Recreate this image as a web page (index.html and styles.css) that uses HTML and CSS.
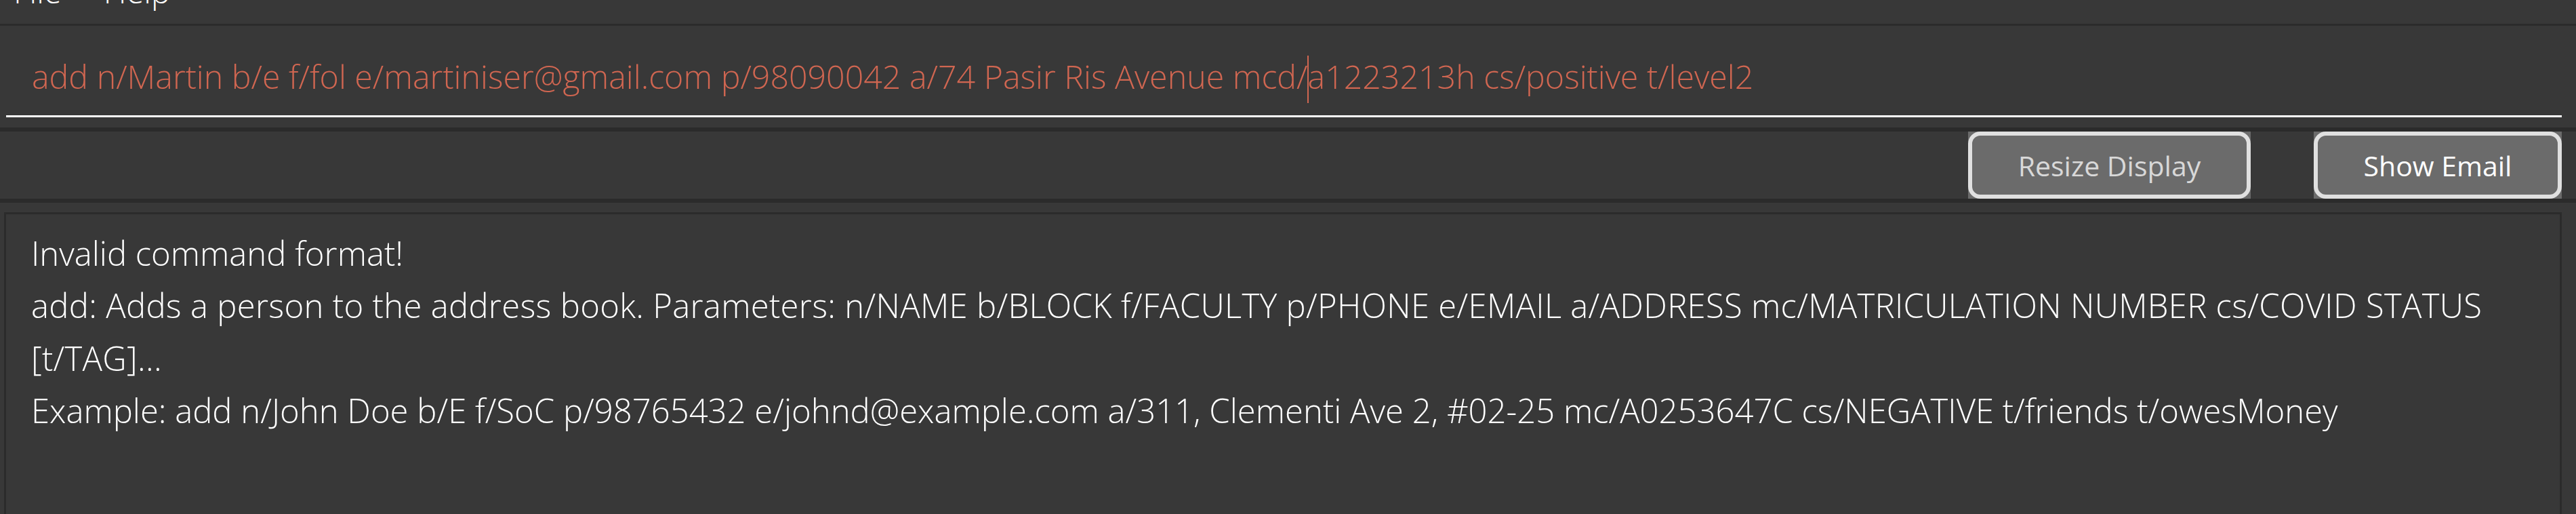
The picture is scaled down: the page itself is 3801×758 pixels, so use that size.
FILE: index.html
```html
<!DOCTYPE html>
<html lang="en">
<head>
<meta charset="utf-8">
<title>AddressBook</title>
<link rel="stylesheet" href="styles.css">
</head>
<body>
<div class="app">
  <nav class="menubar">
    <span class="menu-item menu-file">File</span>
    <span class="menu-item menu-help">Help</span>
  </nav>
  <section class="command-pane">
    <div class="command-field">add n/Martin b/e f/fol e/martiniser@gmail.com p/98090042 a/74 Pasir Ris Avenue mcd/<span class="caret"></span>a1223213h cs/positive t/level2</div>
  </section>
  <section class="button-bar">
    <div class="btn btn-resize"><span class="btn-face btn-face-dim">Resize Display</span></div>
    <div class="btn btn-email"><span class="btn-face">Show Email</span></div>
  </section>
  <section class="result-pane">
    <div class="result-box">
      <p class="result-line">Invalid command format!</p>
      <p class="result-line result-usage">add: Adds a person to the address book. Parameters: n/NAME b/BLOCK f/FACULTY p/PHONE e/EMAIL a/ADDRESS mc/MATRICULATION NUMBER cs/COVID STATUS<br>[t/TAG]...</p>
      <p class="result-line">Example: add n/John Doe b/E f/SoC p/98765432 e/johnd@example.com a/311, Clementi Ave 2, #02-25 mc/A0253647C cs/NEGATIVE t/friends t/owesMoney</p>
    </div>
  </section>
</div>
</body>
</html>
```
FILE: styles.css
```css
html, body {
  margin: 0;
  padding: 0;
}
body {
  background: #383838;
  width: 3801px;
  height: 758px;
  overflow: hidden;
  font-family: "Open Sans", "Noto Sans", "DejaVu Sans", sans-serif;
  color: #ffffff;
}
.app {
  display: flex;
  flex-direction: column;
  height: 758px;
}
.menubar {
  height: 35px;
  overflow: hidden;
  border-bottom: 3px solid #2b2b2b;
  display: flex;
  align-items: flex-start;
  padding-left: 20px;
  gap: 62px;
  flex: none;
}
.menu-item {
  font-size: 47px;
  line-height: 64px;
  font-weight: 300;
  margin-top: -45px;
  color: #ffffff;
}
.command-pane {
  flex: none;
  padding: 0 21px 15px 9px;
  border-bottom: 6px solid #2b2b2b;
}
.command-field {
  padding: 41px 0 25px 38px;
  border-bottom: 3px solid #ffffff;
  font-size: 48.3px;
  line-height: 66px;
  font-weight: 300;
  color: #d06651;
  white-space: nowrap;
  overflow: hidden;
}
.caret {
  position: relative;
  display: inline-block;
  width: 0;
  height: 0;
}
.caret::after {
  content: "";
  position: absolute;
  left: -1px;
  top: -49px;
  width: 2px;
  height: 70px;
  background: #d06651;
}
.button-bar {
  flex: none;
  height: 99px;
  display: flex;
  justify-content: flex-end;
  gap: 93px;
  padding-right: 21px;
  border-bottom: 6px solid #2b2b2b;
}
.btn {
  background: #6b6b6b;
  display: flex;
}
.btn-resize {
  width: 417px;
}
.btn-email {
  width: 366px;
}
.btn-face {
  flex: 1;
  display: flex;
  align-items: center;
  justify-content: center;
  border: 6px solid #e0e0e0;
  border-radius: 18px;
  font-size: 41px;
  font-weight: 400;
  color: #ffffff;
}
.btn-face-dim {
  color: #d8d8d8;
}
.result-pane {
  flex: 1;
  padding: 14px 21px 0 6px;
  min-height: 0;
}
.result-box {
  height: 100%;
  box-sizing: border-box;
  border: 3px solid #2b2b2b;
  border-bottom: none;
  padding: 19px 30px 0 37px;
}
.result-line {
  margin: 0;
  font-size: 49px;
  line-height: 77.3px;
  font-weight: 300;
  color: #ffffff;
  white-space: nowrap;
}
.result-usage {
  letter-spacing: 0.3px;
}
```
